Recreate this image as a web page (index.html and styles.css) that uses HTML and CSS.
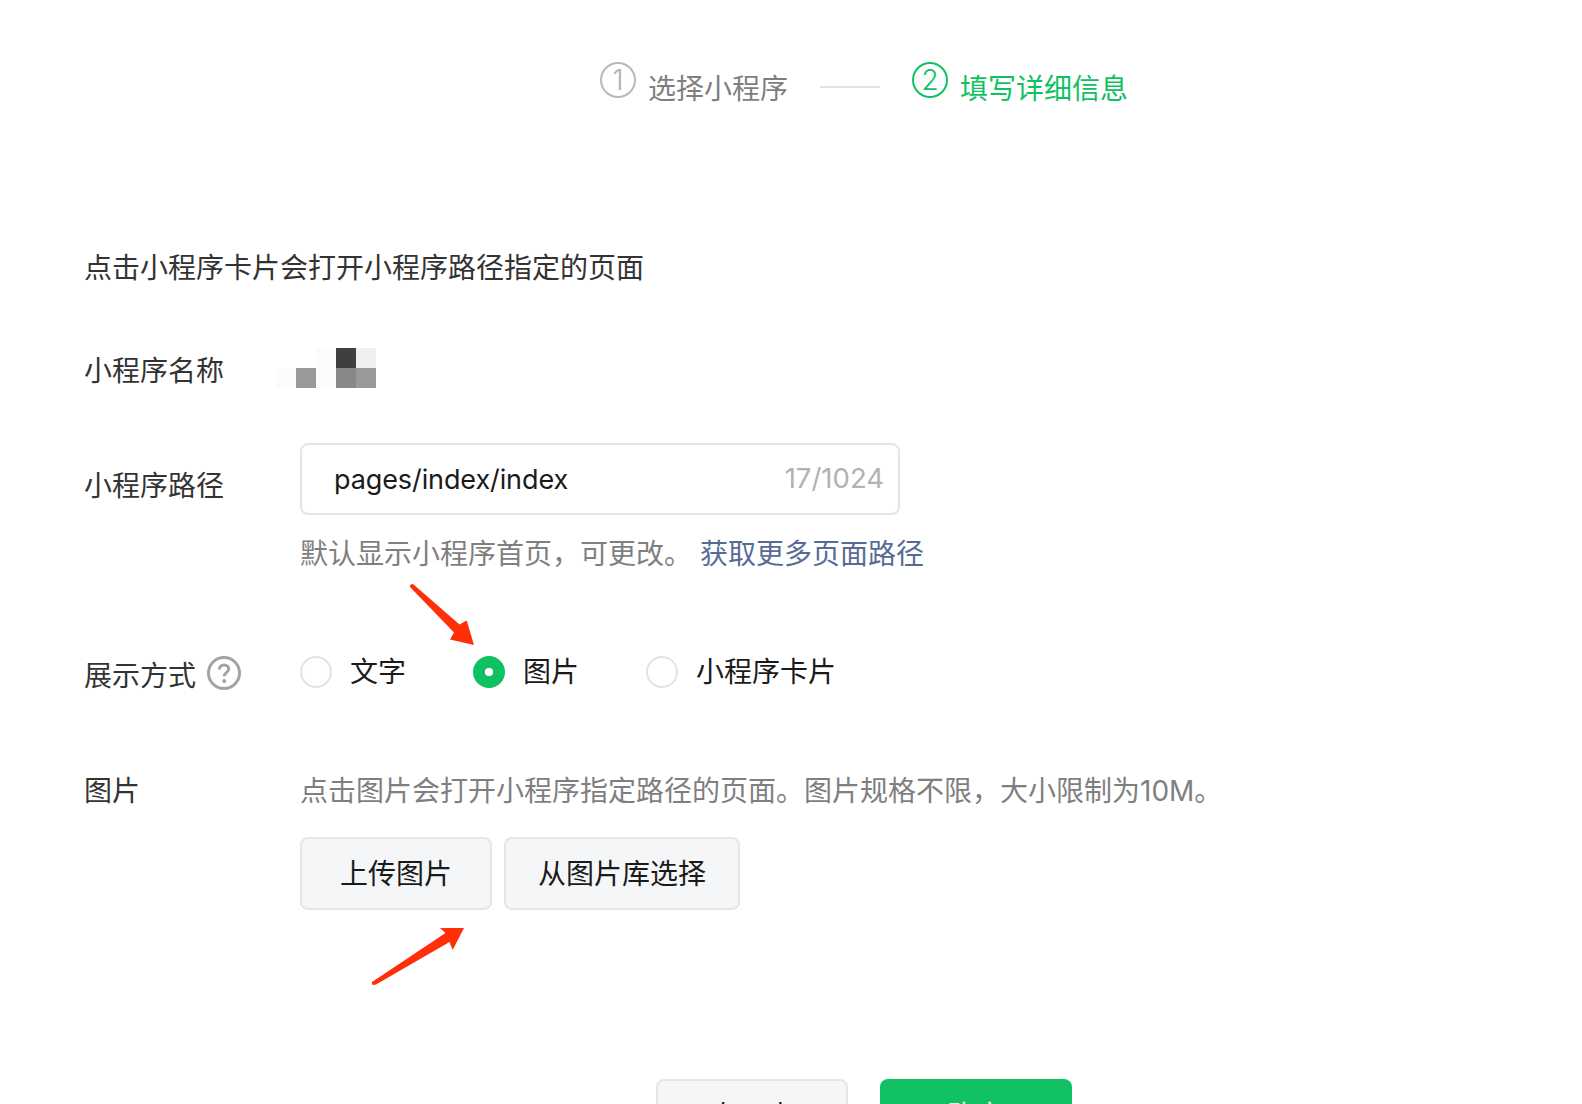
FILE: index.html
```html
<!DOCTYPE html>
<html>
<head>
  <meta charset="UTF-8">
  <title>小程序</title>
  <link rel="stylesheet" href="styles.css">
</head>
<body>
  <div class="steps">
    <span class="step-num">1</span>
    <span class="step-text">选择小程序</span>
    <span class="step-line"></span>
    <span class="step-num active">2</span>
    <span class="step-text active">填写详细信息</span>
  </div>

  <div class="form">
    <p class="intro">点击小程序卡片会打开小程序路径指定的页面</p>

    <div class="row row-name">
      <label class="row-label">小程序名称</label>
      <div class="mosaic">
        <i></i><i></i><i class="m-faint"></i><i class="m-dark"></i><i class="m-light"></i>
        <i class="m-faint"></i><i class="m-mid"></i><i class="m-faint"></i><i class="m-deep"></i><i class="m-mid"></i>
      </div>
    </div>

    <div class="row row-path">
      <label class="row-label">小程序路径</label>
      <div>
        <div class="input-box">
          <span class="input-value">pages/index/index</span>
          <span class="input-count">17/1024</span>
        </div>
        <p class="hint hint-path">默认显示小程序首页，可更改。 <a class="link">获取更多页面路径</a></p>
      </div>
    </div>

    <div class="row row-display">
      <label class="row-label">展示方式
        <svg class="help" viewBox="0 0 34 34">
          <circle cx="17" cy="17" r="15.500" fill="none" stroke="#a3a3a3" stroke-width="3"/>
          <path d="M12.400 13.400c0-2.700 2-4.500 4.700-4.500s4.600 1.700 4.600 4.100c0 3.600-4.500 3.700-4.500 7.300" fill="none" stroke="#a3a3a3" stroke-width="3"/>
          <circle cx="17.200" cy="25" r="2" fill="#a3a3a3"/>
        </svg>
      </label>
      <div class="radios">
        <span class="radio"><i class="radio-dot"></i>文字</span>
        <span class="radio"><i class="radio-dot checked"></i>图片</span>
        <span class="radio"><i class="radio-dot"></i>小程序卡片</span>
      </div>
    </div>

    <div class="row row-image">
      <label class="row-label">图片</label>
      <div>
        <p class="hint">点击图片会打开小程序指定路径的页面。图片规格不限，大小限制为10M。</p>
        <div class="upload-btns">
          <button class="btn btn-upload">上传图片</button>
          <button class="btn btn-library">从图片库选择</button>
        </div>
      </div>
    </div>
  </div>

  <div class="footer">
    <button class="btn btn-footer">上一步</button>
    <button class="btn btn-footer btn-primary">确定</button>
  </div>

  <!-- red arrows drawn over the screenshot -->
  <svg class="arrows" width="1582" height="1104" viewBox="0 0 1582 1104">
    <path fill="#ff2f0a" d="M410 587Q409.500 584 413 584L459.500 624.500L466.700 620.500L474 645L450 639.500L454 632.500Z"/>
    <path fill="#ff2f0a" d="M372 982L445.500 933L440 928L464 928L452.700 950L449.500 942L376 984.500Q371 986 372 982Z"/>
  </svg>
</body>
</html>
```

FILE: styles.css
```css
html, body { margin: 0; height: 1104px; overflow: hidden; }
body { position: relative; background: #fff; font-family: Inter, "Noto Sans CJK SC", sans-serif; font-size: 28px; line-height: 40px; color: #1a1a1a; }
p { margin: 0; }
i { display: block; }

.steps { display: flex; align-items: flex-start; padding: 62px 0 0 600px; color: #7f7f7f; }
.step-num { box-sizing: border-box; width: 36px; height: 36px; border: 2px solid #b8b8b8; border-radius: 50%; color: #b0b0b0; font-size: 28px; font-weight: 300; line-height: 33px; text-align: center; }
.step-num.active { border-color: #0fc160; color: #0fc160; margin-left: 32px; }
.step-text { margin: 7px 0 0 12px; }
.step-text.active { color: #0fc160; }
.step-line { width: 60px; height: 2px; margin: 24px 0 0 32px; background: #e2e2e2; }

.form { padding: 139px 0 0 84px; }
.intro { color: #333; }
.row { display: grid; grid-template-columns: 216px 1fr; }
.row-label { color: #333; display: flex; align-items: center; height: 40px; }
.row-name { margin-top: 60px; }
.row-name .row-label { padding-top: 3px; }
.row-path { margin-top: 52px; }
.row-path .row-label { padding-top: 23px; }
.row-display { margin-top: 74px; }
.row-display .row-label { padding-top: 8px; }
.row-image { margin-top: 75px; }

.mosaic { display: grid; grid-template-columns: repeat(5, 20px); grid-auto-rows: 20px; margin-left: -24px; }
.m-faint { background: #fbfbfb; }
.m-light { background: #f0f0f0; }
.m-mid { background: #999; }
.m-deep { background: #888; }
.m-dark { background: #3f3f3f; }

.input-box { box-sizing: border-box; display: flex; justify-content: space-between; align-items: center; width: 600px; height: 72px; padding: 0 14px 0 32px; border: 2px solid #e5e5e5; border-radius: 8px; }
.input-value { padding-top: 2px; font-size: 27px; letter-spacing: -0.1px; }
.input-count { padding-bottom: 2px; color: #b2b2b2; font-size: 27.500px; }

.hint { color: #7f7f7f; }
.hint-path { margin-top: 19px; }
.link { color: #576b95; }

.help { width: 34px; height: 34px; margin: 0 0 6px 11px; }

.radios { display: flex; }
.radio { display: flex; align-items: center; margin-right: 67px; }
.radio-dot { box-sizing: border-box; width: 32px; height: 32px; margin-right: 18px; border: 2px solid #e2e2e2; border-radius: 50%; }
.radio-dot.checked { border: 0; background: radial-gradient(circle, #fff 0 4px, #0fc160 4.500px); }

.upload-btns { display: flex; gap: 12px; margin-top: 26px; }
.btn { box-sizing: border-box; height: 73px; border: 2px solid #e5e5e5; border-radius: 8px; background: #f5f6f8; color: #1a1a1a; font: inherit; padding: 0; }
.btn-upload { width: 192px; }
.btn-library { width: 236px; }

.footer { display: flex; gap: 32px; padding: 169px 0 0 656px; }
.btn-footer { width: 192px; }
.btn-primary { border: 0; background: #0fc160; color: #fff; }

.arrows { position: absolute; left: 0; top: 0; pointer-events: none; }
```
